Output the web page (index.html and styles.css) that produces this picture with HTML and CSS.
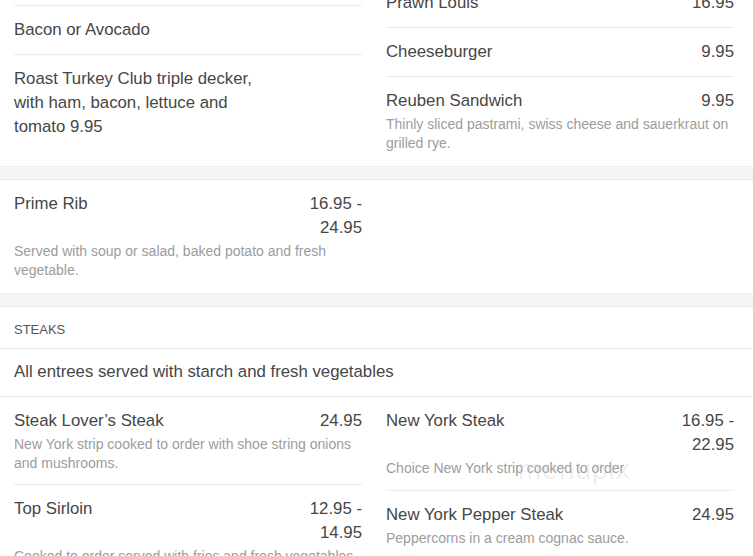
FILE: index.html
```html
<!DOCTYPE html>
<html>
<head>
<meta charset="utf-8">
<link rel="stylesheet" href="styles.css">
</head>
<body>
<div class="page">
  <section class="section first">
    <div class="cols">
      <div class="col">
        <div class="item spacer"></div>
        <div class="item"><div class="row"><span class="name">Bacon or Avocado</span></div></div>
        <div class="item last"><div class="row"><span class="name wide">Roast Turkey Club triple decker, with ham, bacon, lettuce and tomato 9.95</span></div></div>
      </div>
      <div class="col">
        <div class="item"><div class="row"><span class="name">Prawn Louis</span><span class="price">16.95</span></div></div>
        <div class="item"><div class="row"><span class="name">Cheeseburger</span><span class="price">9.95</span></div></div>
        <div class="item last has-desc"><div class="row"><span class="name">Reuben Sandwich</span><span class="price">9.95</span></div><p class="desc">Thinly sliced pastrami, swiss cheese and sauerkraut on grilled rye.</p></div>
      </div>
    </div>
  </section>
  <div class="band"></div>
  <section class="section">
    <div class="cols">
      <div class="col">
        <div class="item last has-desc"><div class="row"><span class="name">Prime Rib</span><span class="price">16.95 - 24.95</span></div><p class="desc">Served with soup or salad, baked potato and fresh vegetable.</p></div>
      </div>
      <div class="col"></div>
    </div>
  </section>
  <div class="band"></div>
  <section class="section">
    <h2 class="heading">STEAKS</h2>
    <p class="note">All entrees served with starch and fresh vegetables</p>
    <div class="cols">
      <div class="col">
        <div class="item has-desc"><div class="row"><span class="name">Steak Lover’s Steak</span><span class="price">24.95</span></div><p class="desc">New York strip cooked to order with shoe string onions and mushrooms.</p></div>
        <div class="item last has-desc"><div class="row"><span class="name">Top Sirloin</span><span class="price">12.95 - 14.95</span></div><p class="desc">Cooked to order served with fries and fresh vegetables.</p></div>
      </div>
      <div class="col">
        <div class="item has-desc"><div class="row"><span class="name">New York Steak</span><span class="price">16.95 - 22.95</span></div><p class="desc">Choice New York strip cooked to order</p></div>
        <div class="item last has-desc"><div class="row"><span class="name">New York Pepper Steak</span><span class="price">24.95</span></div><p class="desc">Peppercorns in a cream cognac sauce.</p></div>
      </div>
    </div>
  </section>
  <div class="watermark">menupix</div>
</div>
</body>
</html>
```

FILE: styles.css
```css
* { box-sizing: border-box; }
html, body { margin: 0; padding: 0; background: #fff; }
body {
  font-family: "Liberation Sans", Arial, sans-serif;
  color: #444;
  overflow: hidden;
}
.page {
  position: relative;
  margin-top: -21px;
}
.section { background: #fff; }
.cols {
  display: grid;
  grid-template-columns: 1fr 1fr;
  column-gap: 24px;
  padding: 0 19px 0 14px;
}
.col { display: flex; flex-direction: column; }
.item {
  padding: 12px 0;
  border-bottom: 1px solid #ececec;
}
.item.last { border-bottom: none; }
.item.last.has-desc { padding-bottom: 14px; }
.item.spacer { padding: 0; height: 27px; }
.row {
  display: flex;
  justify-content: space-between;
  align-items: flex-start;
  font-size: 16.8px;
  line-height: 24px;
  color: #464646;
}
.name { flex: 1; }
.name.wide { max-width: 262px; }
.price {
  max-width: 25%;
  text-align: right;
}
.desc {
  margin: 2px 0 0;
  font-size: 14px;
  line-height: 18.5px;
  color: #9c9c9c;
}
.band {
  height: 14px;
  background: #f5f5f5;
  border-top: 1px solid #efefef;
  border-bottom: 1px solid #e8e8e8;
}
.heading {
  margin: 0;
  padding: 14px 14px 9px;
  font-size: 13px;
  line-height: 18px;
  font-weight: normal;
  color: #555;
  border-bottom: 1px solid #ececec;
}
.note {
  margin: 0;
  padding: 11px 14px 12px;
  font-size: 16.8px;
  line-height: 24px;
  color: #464646;
  border-bottom: 1px solid #ececec;
}
.watermark {
  position: absolute;
  left: 518px;
  top: 476px;
  font-size: 28px;
  line-height: 30px;
  color: rgba(200, 200, 200, 0.3);
  letter-spacing: 1px;
  pointer-events: none;
}
```
